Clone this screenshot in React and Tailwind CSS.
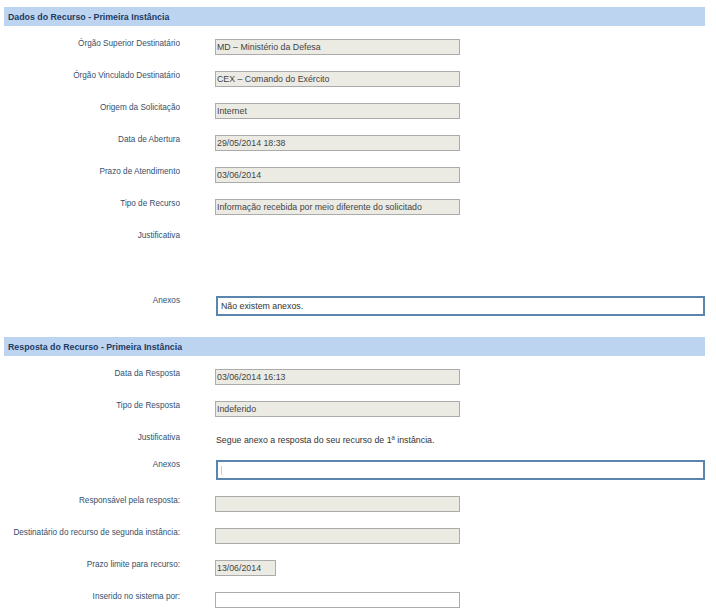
import React from "react";

const font = { fontFamily: '"Liberation Sans", Arial, sans-serif' };

function Header({ children }) {
  return (
    <div className="flex h-[19px] items-center bg-[#bdd4f1] pl-[4px] text-[8.8px] font-bold leading-[10px] text-[#1d3b62]">
      {children}
    </div>
  );
}

function Label({ children }) {
  return <div className="w-[176px] shrink-0 text-right text-[8.2px] leading-[10px] text-[#34506c]">{children}</div>;
}

// campo desabilitado (cinza)
function Field({ value, w = "w-[245px]", white }) {
  return (
    <div className={`ml-[35px] flex h-[16px] items-center border border-[#ababab] px-[1px] text-[8.8px] leading-[10px] text-[#444] ${w} ${white ? "bg-white" : "bg-[#ebebe4]"}`}>
      {value}
    </div>
  );
}

function Row({ label, children, className = "h-[32px]" }) {
  return (
    <div className={`flex items-start ${className}`}>
      <Label>{label}</Label>
      {children}
    </div>
  );
}

function Anexos({ children }) {
  return (
    <div className="ml-[36px] flex h-[20px] w-[490px] items-center border-2 border-[#5a85ad] pl-[3px] text-[8.8px] leading-[10px] text-[#333]">
      {children}
    </div>
  );
}

export default function App() {
  return (
    <div className="h-[615px] w-[716px] overflow-hidden bg-white pl-[4px] pt-[7px]" style={font}>
      <div className="w-[701px]">
        <Header>Dados do Recurso - Primeira Instância</Header>
        <div className="pt-[13px]">
          <Row label="Órgão Superior Destinatário"><Field value="MD – Ministério da Defesa" /></Row>
          <Row label="Órgão Vinculado Destinatário"><Field value="CEX – Comando do Exército" /></Row>
          <Row label="Origem da Solicitação"><Field value="Internet" /></Row>
          <Row label="Data de Abertura"><Field value="29/05/2014 18:38" /></Row>
          <Row label="Prazo de Atendimento"><Field value="03/06/2014" /></Row>
          <Row label="Tipo de Recurso"><Field value="Informação recebida por meio diferente do solicitado" /></Row>
          <Row label="Justificativa" className="h-[65px]" />
          <Row label="Anexos" className="h-[41px]"><Anexos>Não existem anexos.</Anexos></Row>
        </div>

        <Header>Resposta do Recurso - Primeira Instância</Header>
        <div className="pt-[13px]">
          <Row label="Data da Resposta"><Field value="03/06/2014 16:13" /></Row>
          <Row label="Tipo de Resposta"><Field value="Indeferido" /></Row>
          <Row label="Justificativa" className="h-[27px]">
            <div className="ml-[36px] pt-[2px] text-[8.8px] leading-[10px] text-[#333]">Segue anexo a resposta do seu recurso de 1ª instância.</div>
          </Row>
          <Row label="Anexos" className="h-[36px]">
            <Anexos><span className="h-[9px] w-px bg-[#e2c9a4]" /></Anexos>
          </Row>
          <Row label="Responsável pela resposta:"><Field value="" /></Row>
          <Row label="Destinatário do recurso de segunda instância:"><Field value="" /></Row>
          <Row label="Prazo limite para recurso:"><Field value="13/06/2014" w="w-[61px]" /></Row>
          <Row label="Inserido no sistema por:"><Field value="" white /></Row>
        </div>
      </div>
    </div>
  );
}
